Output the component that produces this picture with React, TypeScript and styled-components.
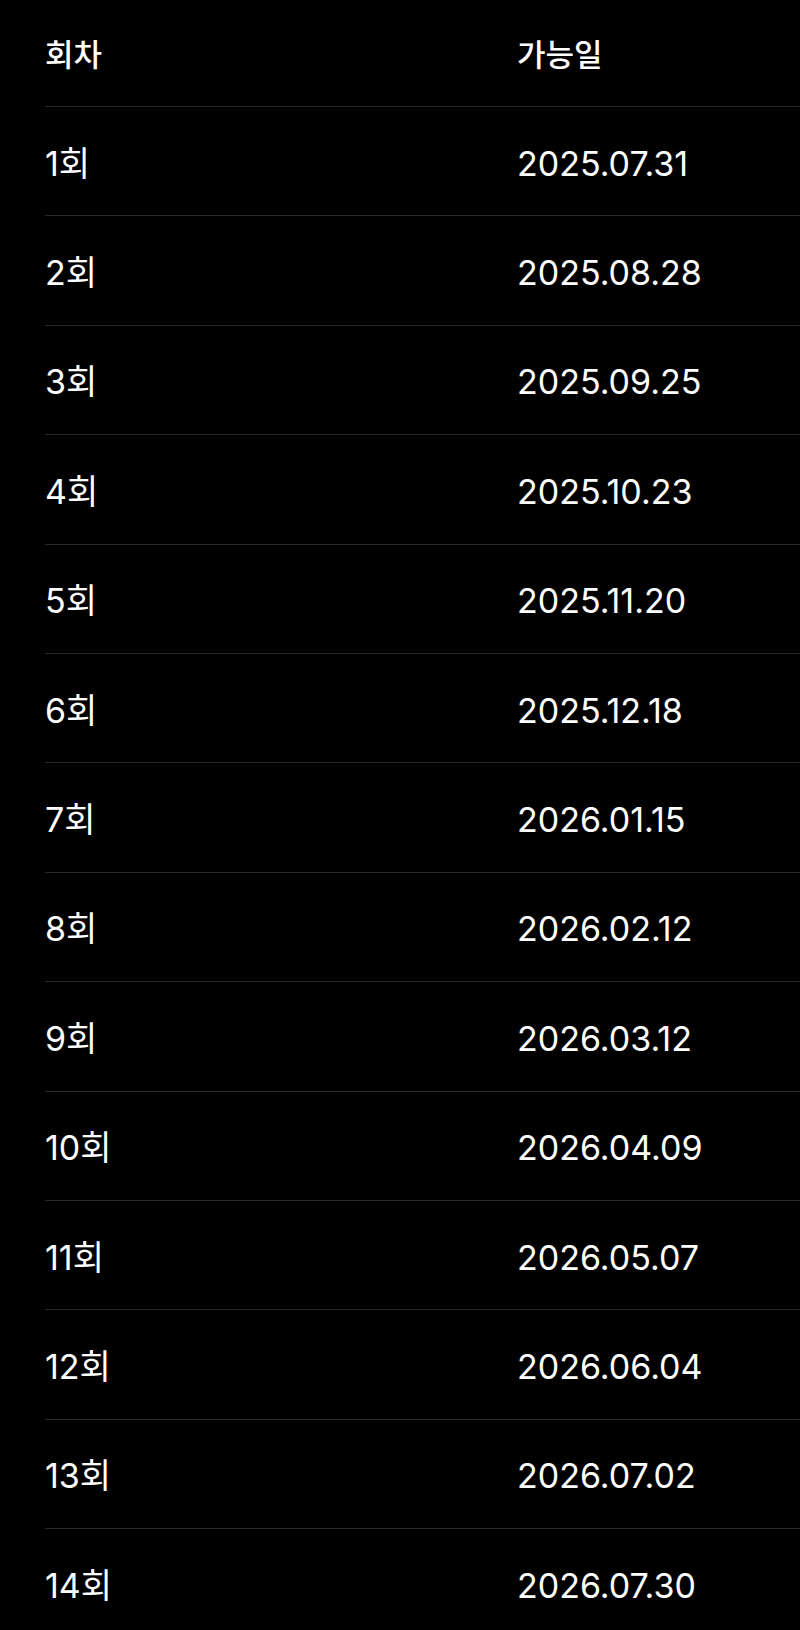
import styled, { createGlobalStyle } from "styled-components";

const schedule = [
  "2025.07.31",
  "2025.08.28",
  "2025.09.25",
  "2025.10.23",
  "2025.11.20",
  "2025.12.18",
  "2026.01.15",
  "2026.02.12",
  "2026.03.12",
  "2026.04.09",
  "2026.05.07",
  "2026.06.04",
  "2026.07.02",
  "2026.07.30",
];

const GlobalStyle = createGlobalStyle`
  html, body {
    margin: 0;
    padding: 0;
    background: #000;
  }
  body {
    font-family: "Inter", "Noto Sans CJK KR", sans-serif;
    color: #fff;
  }
`;

const App = () => (
  <>
    <GlobalStyle />
    <Table>
      <HeaderRow>
        <HeaderCell>회차</HeaderCell>
        <HeaderCell>가능일</HeaderCell>
      </HeaderRow>
      {schedule.map((date, i) => (
        <Row key={date}>
          <Cell>{i + 1}회</Cell>
          <Cell>{date}</Cell>
        </Row>
      ))}
    </Table>
  </>
);

const Table = styled.div`
  padding-left: 45px;
  height: 1630px;
  overflow: hidden;
`;

const HeaderRow = styled.div`
  display: grid;
  grid-template-columns: 472px 1fr;
  align-items: center;
  box-sizing: border-box;
  height: 107px;
  padding-top: 2px;
  border-bottom: 1px solid #2a2a2a;
`;

const Row = styled(HeaderRow)`
  height: 109.4px;
  padding-top: 5px;
`;

const HeaderCell = styled.div`
  font-size: 31px;
  font-weight: 500;
  line-height: 1;
`;

const Cell = styled.div`
  font-size: 34px;
  font-weight: 400;
  line-height: 1;
`;

export default App;
